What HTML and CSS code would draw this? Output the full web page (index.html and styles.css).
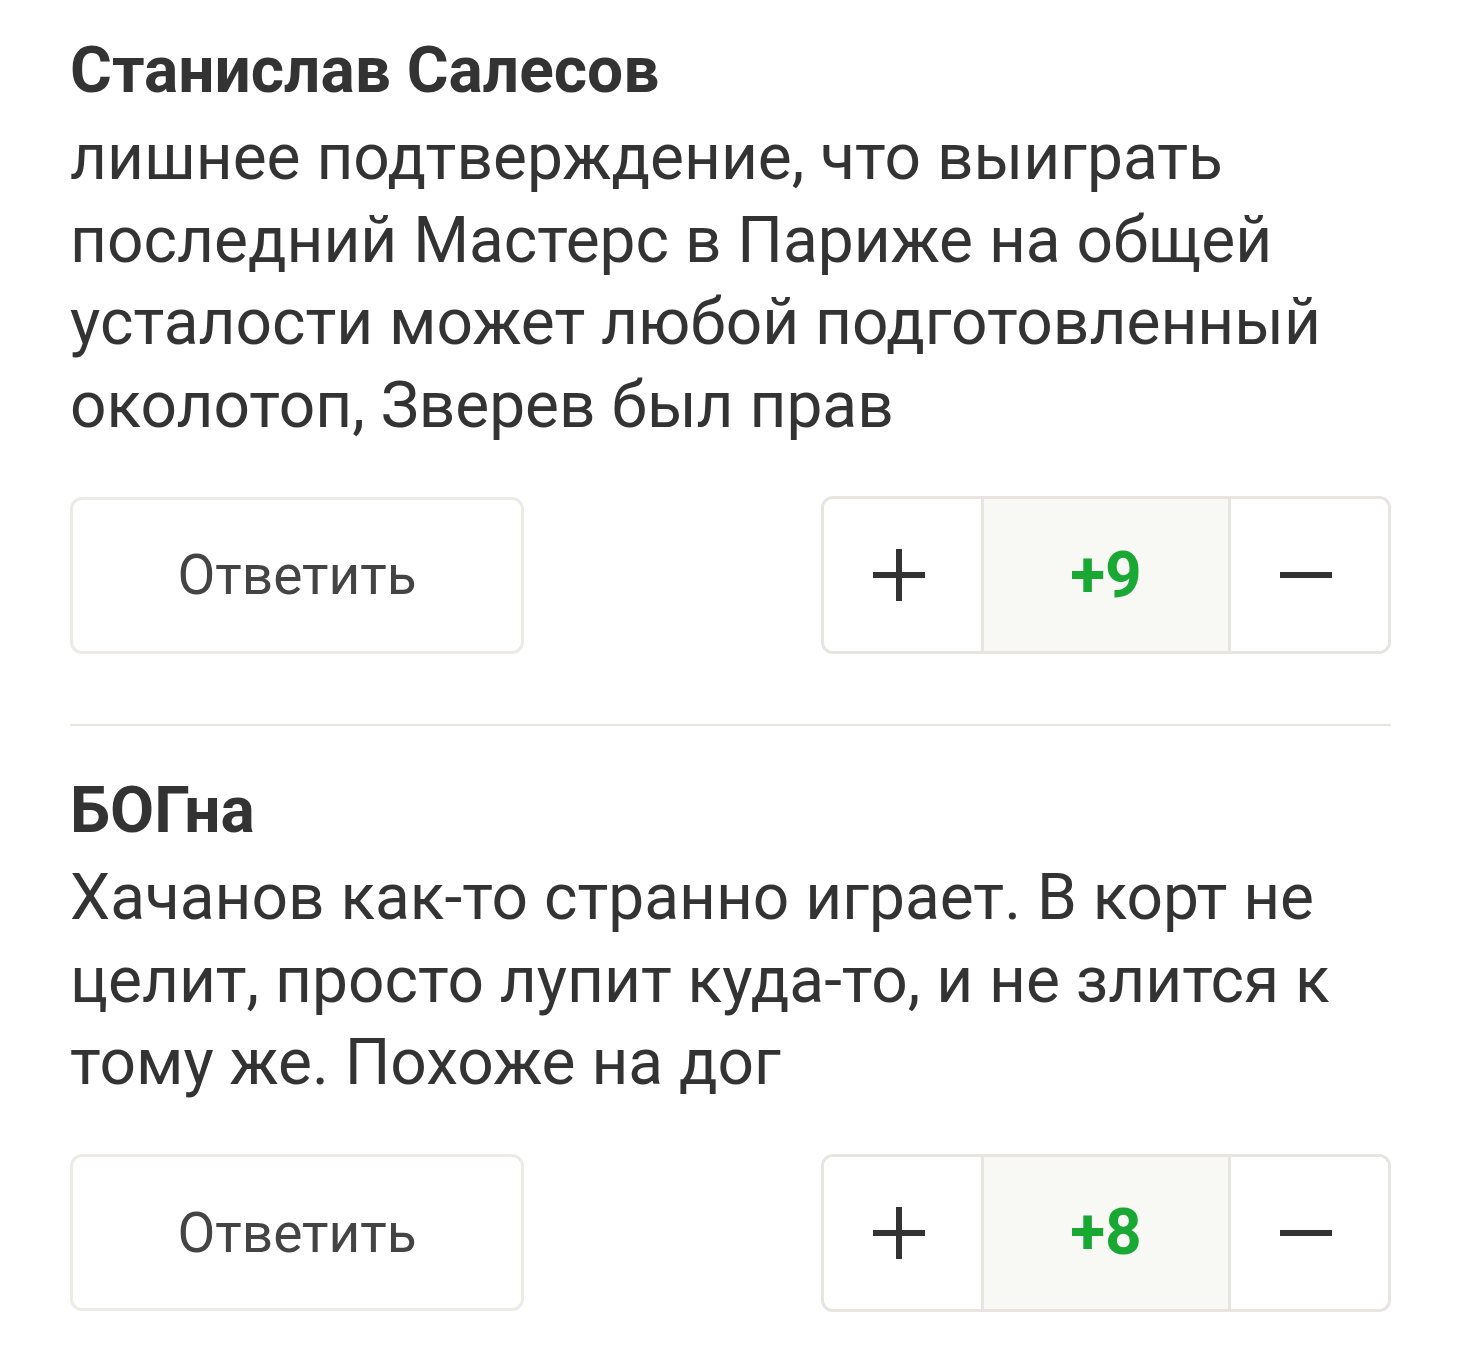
FILE: index.html
```html
<!DOCTYPE html>
<html>
<head>
  <meta charset="UTF-8">
  <link rel="stylesheet" href="styles.css">
</head>
<body>
  <div id="comments">
    <div class="comment">
      <div class="comment-author">Станислав Салесов</div>
      <div class="comment-text">лишнее подтверждение, что выиграть последний Мастерс в Париже на общей усталости может любой подготовленный околотоп, Зверев был прав</div>
      <div class="comment-actions">
        <button class="reply-btn">Ответить</button>
        <div class="vote">
          <button class="vote-btn vote-up" title="Плюс">
            <svg width="54" height="54" viewBox="0 0 54 54"><path d="M27 1v52M1 27h52" stroke="#333" stroke-width="6"/></svg>
          </button>
          <div class="vote-count">+9</div>
          <button class="vote-btn vote-down" title="Минус">
            <svg width="54" height="54" viewBox="0 0 54 54"><path d="M1 27h52" stroke="#333" stroke-width="6"/></svg>
          </button>
        </div>
      </div>
    </div>
    <div class="comment">
      <div class="comment-author">БОГна</div>
      <div class="comment-text">Хачанов как-то странно играет. В корт не целит, просто лупит куда-то, и не злится к тому же. Похоже на дог</div>
      <div class="comment-actions">
        <button class="reply-btn">Ответить</button>
        <div class="vote">
          <button class="vote-btn vote-up" title="Плюс">
            <svg width="54" height="54" viewBox="0 0 54 54"><path d="M27 1v52M1 27h52" stroke="#333" stroke-width="6"/></svg>
          </button>
          <div class="vote-count">+8</div>
          <button class="vote-btn vote-down" title="Минус">
            <svg width="54" height="54" viewBox="0 0 54 54"><path d="M1 27h52" stroke="#333" stroke-width="6"/></svg>
          </button>
        </div>
      </div>
    </div>
  </div>
</body>
</html>
```

FILE: styles.css
```css
* { box-sizing: border-box; margin: 0; padding: 0; }
body {
  font-family: Roboto, "Noto Sans", sans-serif;
  background: #fff;
  color: #333;
  padding: 0 69px 0 70px;
}
.comment {
  padding: 33px 0 70px;
}
.comment + .comment {
  border-top: 2px solid #e6e6df;
  padding-top: 47px;
}
.comment-author {
  font-size: 64px;
  font-weight: 700;
  line-height: 76px;
  color: #333;
}
.comment-text {
  font-size: 64px;
  line-height: 82.5px;
  color: #333;
  margin-top: 8px;
}
.comment-actions {
  display: flex;
  justify-content: space-between;
  align-items: center;
  margin-top: 49px;
}
button {
  font-family: inherit;
  background: #fff;
  cursor: pointer;
}
.reply-btn {
  width: 454px;
  height: 157px;
  border: 3px solid #ecebe6;
  border-radius: 12px;
  font-size: 55px;
  color: #444;
}
.vote {
  display: flex;
  width: 570px;
  height: 158px;
  border: 3px solid #e6e5df;
  border-radius: 12px;
  overflow: hidden;
}
.vote-btn {
  width: 157px;
  border: none;
  padding-right: 8px;
  display: flex;
  align-items: center;
  justify-content: center;
}
.vote-count {
  flex: 1;
  background: #f8f8f5;
  border-left: 3px solid #e6e5df;
  border-right: 3px solid #e6e5df;
  display: flex;
  align-items: center;
  justify-content: center;
  font-size: 64px;
  font-weight: 700;
  color: #1aa834;
}
```
